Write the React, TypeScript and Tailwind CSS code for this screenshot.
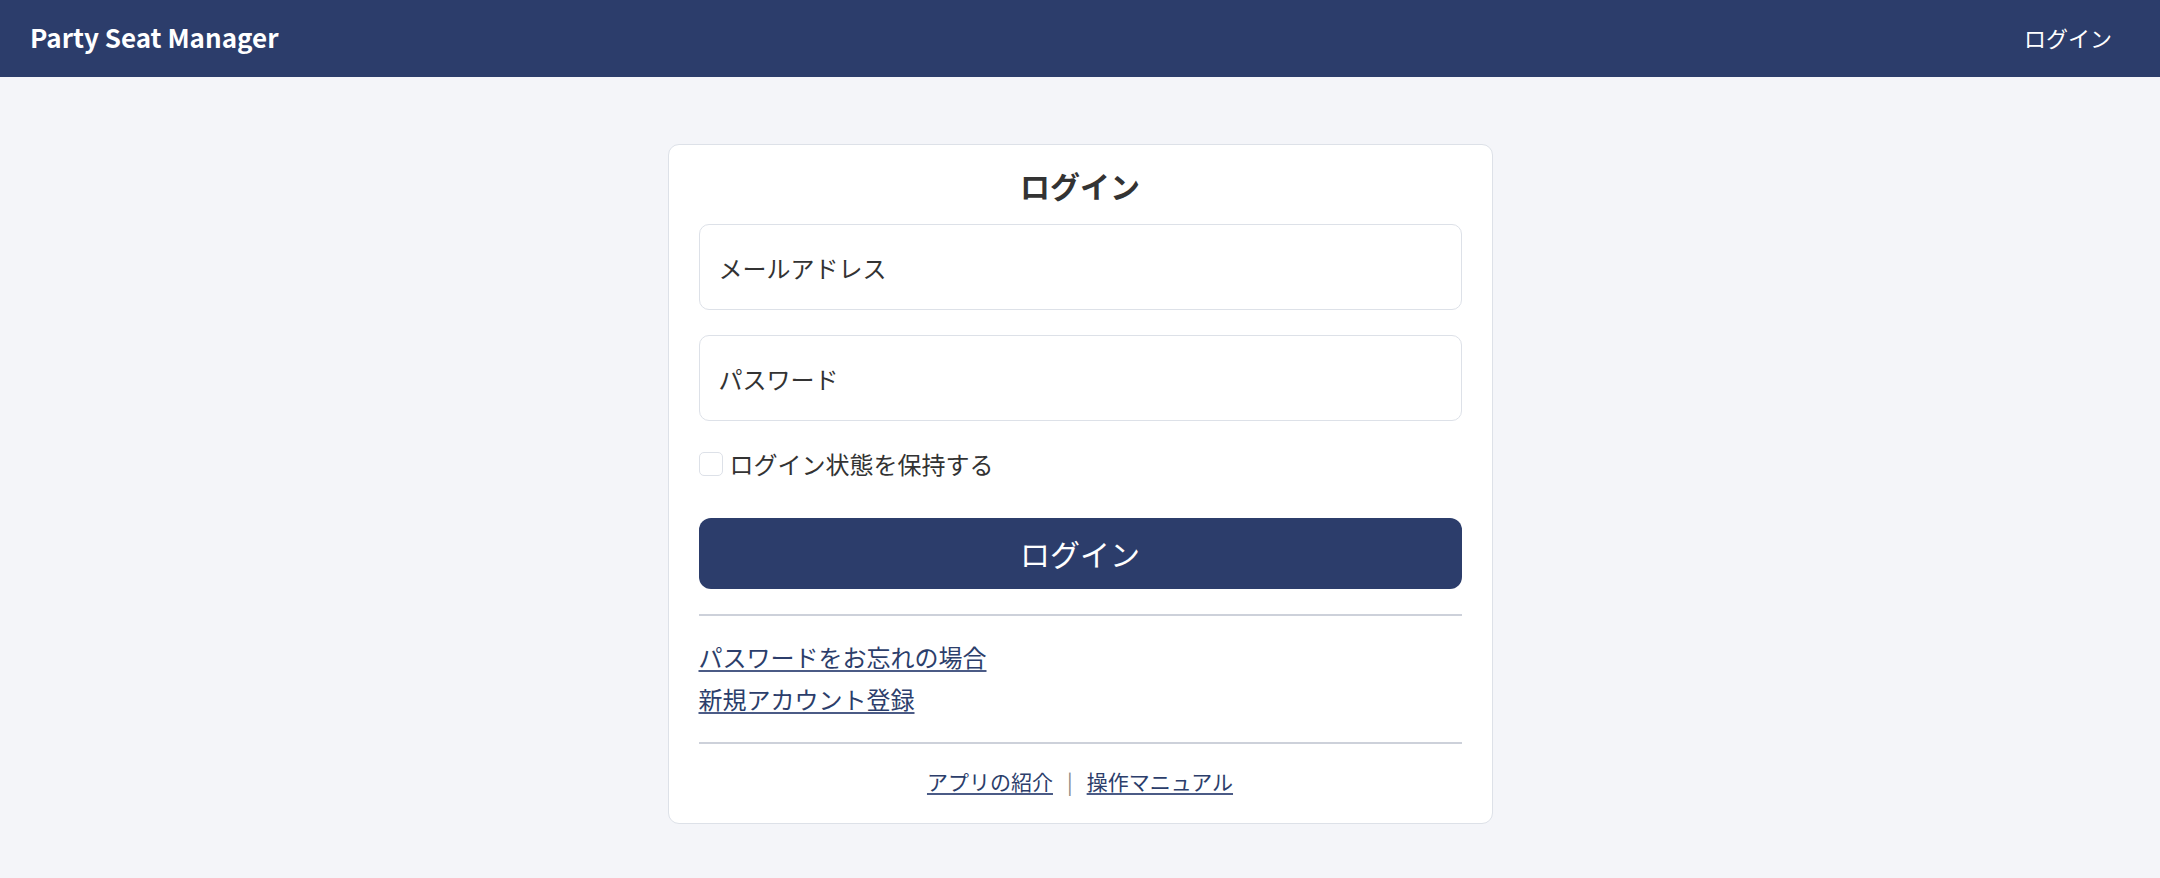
import { useState } from "react";

const linkClass =
  "text-[#2c3e6b] underline decoration-[#4b5b86] decoration-[2px] underline-offset-[3px]";

export default function App() {
  const [remember, setRemember] = useState(false);

  return (
    <div className="min-h-screen bg-[#f4f5f9] font-['Noto_Sans_CJK_JP','Noto_Sans',sans-serif] text-[#333]">
      <header className="flex h-[77px] items-center justify-between bg-[#2c3d6b] pb-[3px] pl-[30px] pr-[48px]">
        <span className="text-[26px] font-bold leading-none text-white">Party Seat Manager</span>
        <a href="#" className="text-[22px] leading-none text-white">
          ログイン
        </a>
      </header>

      <main className="flex justify-center pt-[67px]">
        <div className="w-[825px] rounded-[11px] border border-[#dde1e8] bg-white px-[30px] pb-[25px] pt-[16px]">
          <h1 className="text-center text-[30px] font-bold leading-[48px] text-[#333]">ログイン</h1>

          <form className="mt-[15px] flex flex-col" onSubmit={(e) => e.preventDefault()}>
            <input
              type="email"
              placeholder="メールアドレス"
              className="h-[86px] w-full rounded-[10px] border border-[#dde1e8] px-[19px] text-[24px] outline-none placeholder:text-[#333]"
            />
            <input
              type="password"
              placeholder="パスワード"
              className="mt-[25px] h-[86px] w-full rounded-[10px] border border-[#dde1e8] px-[19px] text-[24px] outline-none placeholder:text-[#333]"
            />

            <label className="mt-[25px] flex h-[36px] items-center gap-[7px] text-[24px] leading-[36px]">
              <input
                type="checkbox"
                checked={remember}
                onChange={() => setRemember((v) => !v)}
                className="h-[24px] w-[24px] appearance-none rounded-[5px] border border-[#dde1e8] bg-white"
              />
              ログイン状態を保持する
            </label>

            <button
              type="submit"
              className="mt-[36px] h-[71px] w-full rounded-[12px] bg-[#2c3d6b] text-[30px] text-white"
            >
              ログイン
            </button>
          </form>

          <div className="mt-[25px] h-[2px] bg-[#cdd1da]" />

          <div className="mt-[20px] flex flex-col items-start text-[24px] leading-[42px]">
            <a href="#" className={linkClass}>
              パスワードをお忘れの場合
            </a>
            <a href="#" className={linkClass}>
              新規アカウント登録
            </a>
          </div>

          <div className="mt-[22px] h-[2px] bg-[#cdd1da]" />

          <div className="mt-[21px] flex items-center justify-center text-[21px] leading-[33px]">
            <a href="#" className={linkClass}>
              アプリの紹介
            </a>
            <span className="mx-[14px] text-[#888]">|</span>
            <a href="#" className={linkClass}>
              操作マニュアル
            </a>
          </div>
        </div>
      </main>
    </div>
  );
}
